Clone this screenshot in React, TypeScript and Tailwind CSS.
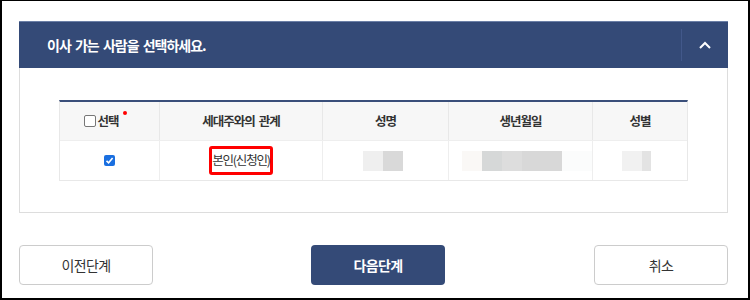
import React from "react";

const F = { fontFamily: '"Noto Sans CJK KR", "Noto Sans", sans-serif' };

function Box({ parts }: { parts: [number, string][] }) {
  return (
    <div className="flex h-[20px]">
      {parts.map(([w, c], i) => (
        <div key={i} style={{ width: w, background: c }} />
      ))}
    </div>
  );
}

export default function App() {
  return (
    <div
      className="w-[750px] h-[300px] box-border border-t border-l-2 border-r-2 border-b-2 border-black bg-white pl-[17px] pr-[20px] pt-[20px]"
      style={F}
    >
      <div className="w-[709px]">
        {/* Header */}
        <div className="h-[47px] bg-[#344a77] border-t border-[#6b7fa6] flex items-center">
          <div className="flex-1 pl-[28px] text-white font-bold text-[14px] tracking-[-1px] [word-spacing:2px]">
            이사 가는 사람을 선택하세요.
          </div>
          <div className="w-px h-[32px] bg-[#42588a]" />
          <div className="w-[46px] flex justify-center items-center">
            <svg width="12" height="8" viewBox="0 0 12 8">
              <polyline points="1,7 6,2 11,7" fill="none" stroke="#ffffff" strokeWidth="2" />
            </svg>
          </div>
        </div>
        {/* Body */}
        <div className="border-l border-r border-b border-[#dddddd] pt-[32px] pb-[31px] px-[39px]">
          <div className="border-t-2 border-[#3a4f7a] border-l border-r border-b border-l-[#e8e8e8] border-r-[#e8e8e8] border-b-[#e8e8e8]">
            <div className="flex h-[39px] bg-[#f7f7f7] text-[12.5px] font-bold text-[#333] tracking-[-1px] [word-spacing:2px] border-b border-[#eeeeee]">
              <div className="w-[100px] flex items-center justify-center border-r border-[#e8e8e8] pr-[8px]">
                <div className="w-[12px] h-[12px] border border-[#777] rounded-[2px] bg-white mr-[1px]" />
                <span>선택</span>
                <span className="w-[4px] h-[4px] rounded-full bg-[#ff0000] self-start mt-[9px] ml-[4px]" />
              </div>
              <div className="w-[163px] flex items-center justify-center border-r border-[#e8e8e8]">세대주와의 관계</div>
              <div className="w-[126px] flex items-center justify-center border-r border-[#e8e8e8]">성명</div>
              <div className="w-[144px] flex items-center justify-center border-r border-[#e8e8e8]">생년월일</div>
              <div className="flex-1 flex items-center justify-center">성별</div>
            </div>
            <div className="flex h-[39px] text-[12.5px] text-[#333] tracking-[-1.2px]">
              <div className="w-[100px] flex items-center justify-center border-r border-[#eeeeee]">
                <div className="w-[11px] h-[11px] rounded-[2px] bg-[#1a6fe0] flex items-center justify-center">
                  <svg width="9" height="9" viewBox="0 0 9 9">
                    <polyline points="1.5,4.8 3.6,6.8 7.6,2" fill="none" stroke="#fff" strokeWidth="1.6" />
                  </svg>
                </div>
              </div>
              <div className="w-[163px] flex items-center justify-center border-r border-[#eeeeee]">
                <div className="border-[3px] border-[#ff0000] rounded-[3px] h-[29px] w-[64px] flex items-center justify-center whitespace-nowrap">
                  본인(신청인)
                </div>
              </div>
              <div className="w-[126px] flex items-center justify-center border-r border-[#eeeeee] pr-[6px]">
                <Box parts={[[20, "#efefef"], [20, "#d9d9d9"]]} />
              </div>
              <div className="w-[144px] flex items-center justify-start border-r border-[#eeeeee] pl-[13px]">
                <Box parts={[[20, "#faf8f6"], [20, "#d6d8d8"], [20, "#dddddd"], [40, "#d8d8d8"], [30, "#fbfcfc"]]} />
              </div>
              <div className="flex-1 flex items-center justify-start pl-[29px]">
                <Box parts={[[20, "#f1f1f1"], [9, "#e3e3e3"]]} />
              </div>
            </div>
          </div>
        </div>
        {/* Buttons */}
        <div className="flex mt-[32px] text-[14px] tracking-[-0.6px]">
          <div className="w-[134px] h-[40px] border border-[#cccccc] rounded-[4px] flex items-center justify-center text-[#333]">
            이전단계
          </div>
          <div className="ml-[158px] w-[134px] h-[40px] rounded-[4px] bg-[#344a77] flex items-center justify-center text-white font-bold">
            다음단계
          </div>
          <div className="ml-auto w-[134px] h-[40px] border border-[#cccccc] rounded-[4px] flex items-center justify-center text-[#333]">
            취소
          </div>
        </div>
      </div>
    </div>
  );
}
